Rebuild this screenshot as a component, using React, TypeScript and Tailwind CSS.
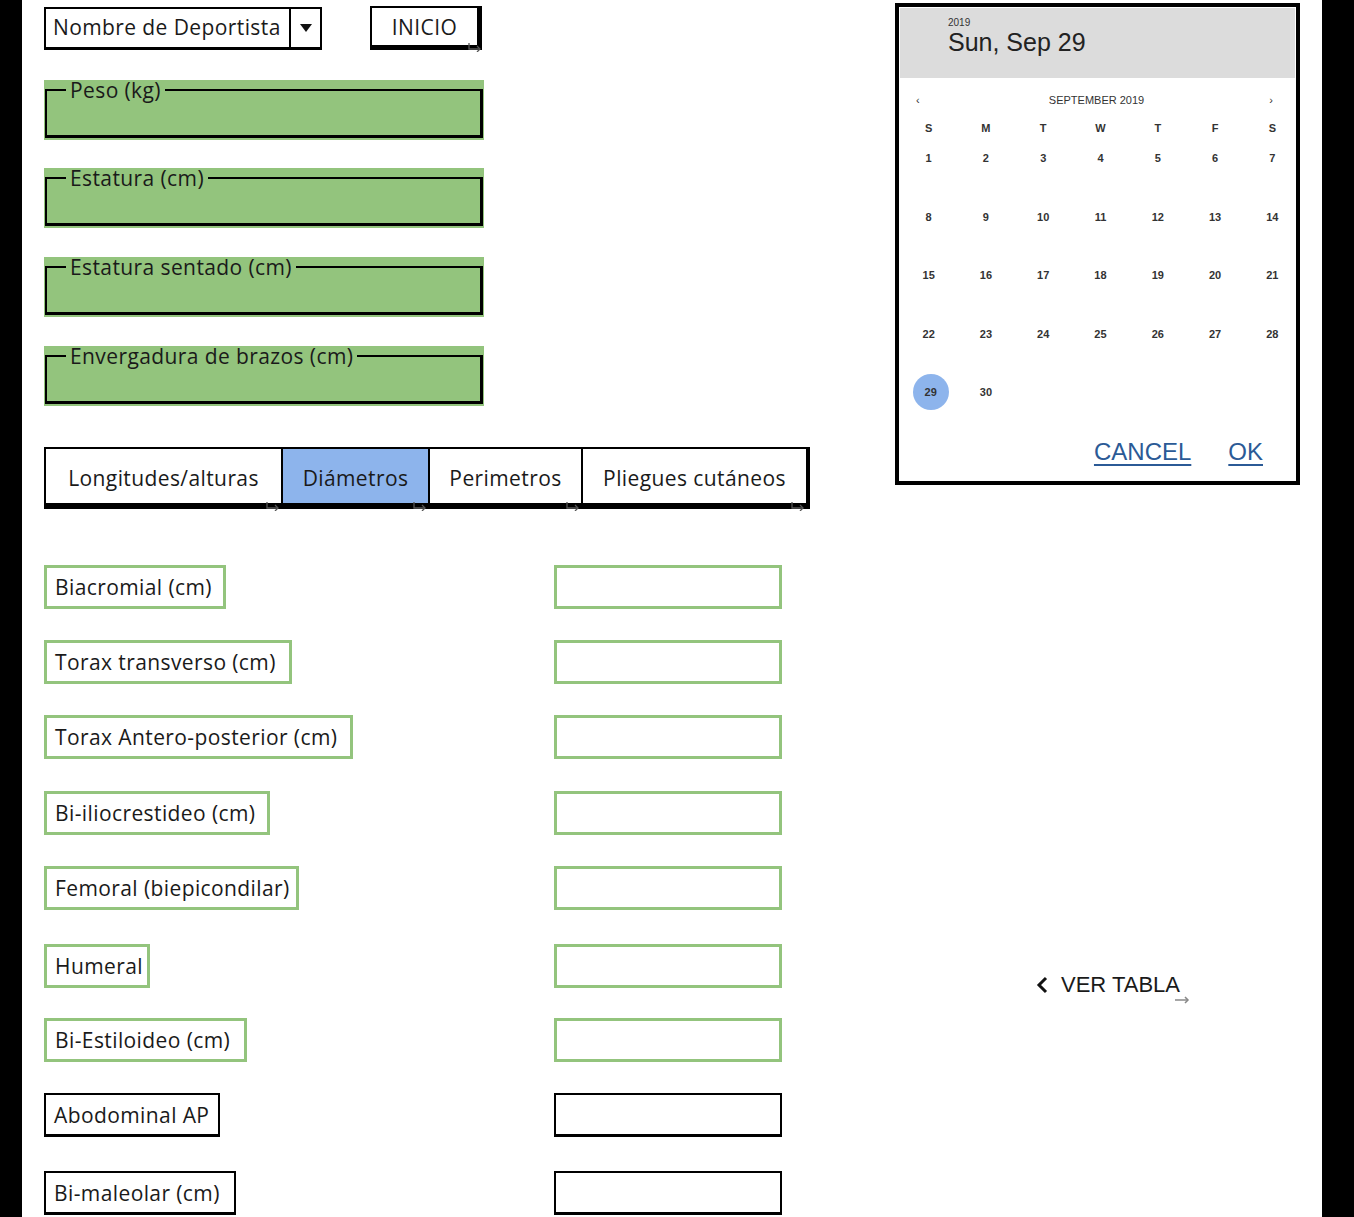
import React from 'react';

const sketch = { fontFamily: '"Open Sans", Lato, sans-serif' };
const arial = { fontFamily: '"Liberation Sans", Arial, sans-serif' };

interface Medida {
  label: string;
  width: string;
  mt: string;
  dark?: boolean;
}

const medidas: Medida[] = [
  { label: 'Biacromial (cm)', width: 'w-[182px]', mt: 'mt-[56px]' },
  { label: 'Torax transverso (cm)', width: 'w-[248px]', mt: 'mt-[31px]' },
  { label: 'Torax Antero-posterior (cm)', width: 'w-[309px]', mt: 'mt-[31px]' },
  { label: 'Bi-iliocrestideo (cm)', width: 'w-[226px]', mt: 'mt-[32px]' },
  { label: 'Femoral (biepicondilar)', width: 'w-[255px]', mt: 'mt-[31px]' },
  { label: 'Humeral', width: 'w-[106px]', mt: 'mt-[34px]' },
  { label: 'Bi-Estiloideo (cm)', width: 'w-[203px]', mt: 'mt-[30px]' },
  { label: 'Abodominal AP', width: 'w-[176px]', mt: 'mt-[31px]', dark: true },
  { label: 'Bi-maleolar (cm)', width: 'w-[192px]', mt: 'mt-[34px]', dark: true },
];

const campos = ['Peso (kg)', 'Estatura (cm)', 'Estatura sentado (cm)', 'Envergadura de brazos (cm)'];

const tabs = [
  { label: 'Longitudes/alturas', width: 'w-[237px]' },
  { label: 'Diámetros', width: 'w-[147px]', active: true },
  { label: 'Perimetros', width: 'w-[153px]' },
  { label: 'Pliegues cutáneos', width: 'w-[229px]', last: true },
];

const weeks = [
  ['1', '2', '3', '4', '5', '6', '7'],
  ['8', '9', '10', '11', '12', '13', '14'],
  ['15', '16', '17', '18', '19', '20', '21'],
  ['22', '23', '24', '25', '26', '27', '28'],
  ['29', '30', '', '', '', '', ''],
];

// little link arrow balsamiq puts on buttons
function LinkArrow({ className }: { className: string }) {
  return (
    <svg width="16" height="10" viewBox="0 0 16 10" className={className} fill="none" stroke="#555" strokeWidth="1.3">
      <path d="M2 1v6h11" />
      <path d="M10 4l3 3-3 3" />
    </svg>
  );
}

export default function App() {
  return (
    <div className="flex h-[1217px] w-[1354px] overflow-hidden bg-black text-[#1a1a1a]">
      <div className="ml-[22px] flex h-full w-[1300px] bg-white pl-[22px]">
        {/* Left column */}
        <div className="w-[766px] text-[21px] tracking-[0.4px]" style={sketch}>
          <div className="flex items-start pt-[6px]">
            <div className="mt-[1px] flex h-[43px] w-[278px] border-2 border-b-[3px] border-black">
              <div className="flex flex-1 items-center pb-[2px] pl-[7px] leading-[24px]">Nombre de Deportista</div>
              <div className="flex w-[31px] items-center justify-center border-l-2 border-black">
                <svg width="12" height="8" viewBox="0 0 12 8">
                  <path d="M0 0h12L6 8z" fill="#111" />
                </svg>
              </div>
            </div>
            <div className="relative ml-[48px] flex h-[44px] w-[112px] items-center justify-center border-2 border-r-[5px] border-b-[5px] border-black leading-[24px]">
              INICIO
              <LinkArrow className="absolute -right-[6px] -bottom-[7px]" />
            </div>
          </div>

          {campos.map((c, i) => (
            <div
              key={c}
              className={`h-[60px] w-[440px] bg-[#93c47d] px-[1px] ${i === 0 ? 'mt-[30px]' : i === 1 ? 'mt-[28px]' : 'mt-[29px]'}`}
            >
              <fieldset className="h-[58px] border-2 border-r-[3px] border-b-[3px] border-black pl-[19px]">
                <legend className="px-1 leading-[20px]">{c}</legend>
              </fieldset>
            </div>
          ))}

          {/* Tabs */}
          <div className="mt-[41px] flex h-[62px] w-[766px]">
            {tabs.map((t) => (
              <div
                key={t.label}
                className={`relative flex items-center justify-center border-t-2 border-l-2 border-b-[6px] border-black pt-[4px] leading-[24px] ${t.width} ${t.active ? 'bg-[#8db4ec]' : 'bg-white'} ${t.last ? 'border-r-[4px]' : ''}`}
              >
                {t.label}
                <LinkArrow className="absolute right-[0px] -bottom-[8px]" />
              </div>
            ))}
          </div>

          {/* Medidas */}
          {medidas.map((m) => (
            <div key={m.label} className={`flex h-[44px] items-stretch ${m.mt}`}>
              <div
                className={`flex items-center whitespace-nowrap pl-[8px] leading-[24px] ${m.width} ${m.dark ? 'border-2 border-b-[3px] border-black' : 'border-[3px] border-[#93c47d]'}`}
              >
                {m.label}
              </div>
              <div
                className={`ml-auto mr-[28px] w-[228px] ${m.dark ? 'border-2 border-b-[3px] border-black' : 'border-[3px] border-[#93c47d]'}`}
              />
            </div>
          ))}
        </div>

        {/* Right column */}
        <div className="ml-[85px] w-[405px]">
          <div className="mt-[3px] h-[482px] w-[405px] overflow-hidden border-[4px] border-black p-[1px] text-[#333]" style={arial}>
            <div className="h-[70px] bg-[#dcdcdc] pt-[9px] pl-[48px]">
              <div className="text-[10px] leading-[12px]">2019</div>
              <div className="text-[25px] leading-[26px] text-[#222]">Sun, Sep 29</div>
            </div>
            <div className="mt-[12px] flex h-[20px] items-center justify-between pr-[22px] pl-[16px] text-[11px]">
              <span>‹</span>
              <span className="ml-[4px]">SEPTEMBER 2019</span>
              <span>›</span>
            </div>
            <div className="mt-[8px] grid h-[20px] w-[401px] grid-cols-7 items-center text-center text-[11px] font-semibold">
              {['S', 'M', 'T', 'W', 'T', 'F', 'S'].map((d, i) => (
                <span key={i}>{d}</span>
              ))}
            </div>
            <div className="mt-[10px] w-[401px]">
              {weeks.map((w, wi) => (
                <div key={wi} className="grid h-[58.5px] grid-cols-7 text-center text-[11px] font-bold leading-[20px]">
                  {w.map((d, di) =>
                    d === '29' ? (
                      <div key={di} className="flex justify-center">
                        <span className="-mt-[8px] ml-[4px] flex h-[36px] w-[36px] items-center justify-center rounded-full bg-[#8db4ec]">
                          29
                        </span>
                      </div>
                    ) : (
                      <span key={di}>{d}</span>
                    )
                  )}
                </div>
              ))}
            </div>
            <div className="-mt-[3px] flex justify-end gap-[37px] pr-[32px] text-[24px] leading-[28px] text-[#2b5a96]">
              <span className="underline decoration-[2px] underline-offset-[4px]">CANCEL</span>
              <span className="underline decoration-[2px] underline-offset-[4px]">OK</span>
            </div>
          </div>

          <div className="relative mt-[487px] ml-[141px] flex w-fit items-center text-[22px] leading-[26px] text-[#1a1a1a]" style={arial}>
            <svg width="12" height="18" viewBox="0 0 12 18" fill="none" stroke="#111" strokeWidth="3">
              <path d="M10 2L3 9l7 7" />
            </svg>
            <span className="ml-[13px]">VER TABLA</span>
            <svg width="16" height="8" viewBox="0 0 16 8" className="absolute -right-[10px] -bottom-[6px]" fill="none" stroke="#888" strokeWidth="1.5">
              <path d="M1 4h13" />
              <path d="M11 1l3 3-3 3" />
            </svg>
          </div>
        </div>
      </div>
    </div>
  );
}
